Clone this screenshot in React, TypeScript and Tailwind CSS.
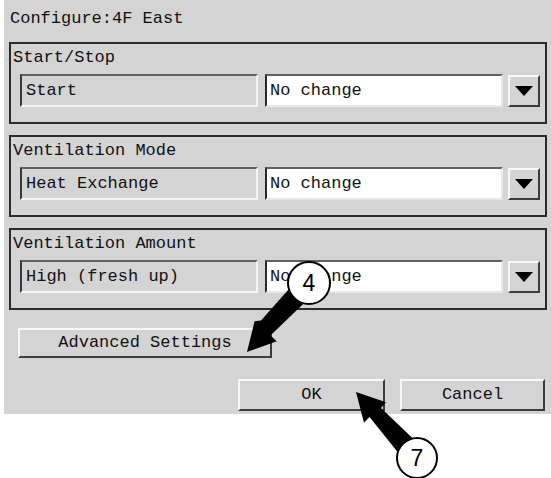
import type { ReactNode } from 'react'

const groups = [
  { title: 'Start/Stop', value: 'Start' },
  { title: 'Ventilation Mode', value: 'Heat Exchange' },
  { title: 'Ventilation Amount', value: 'High (fresh up)' },
]

function RaisedButton({ className, children }: { className: string; children?: ReactNode }) {
  return (
    <div
      className={
        'flex items-center justify-center border-2 border-t-[#f8f8f8] border-l-[#f8f8f8] border-b-[#3c3c3c] border-r-[#3c3c3c] bg-[#d4d4d4] ' +
        className
      }
    >
      {children}
    </div>
  )
}

function Group({ title, value }: { title: string; value: string }) {
  return (
    <div className="h-[82px] border-2 border-[#2b2b2b]">
      <div className="h-[30px] pl-[2px] pt-[4px] leading-[20px]">{title}</div>
      <div className="flex items-center pl-[9px] pr-[5px]">
        {/* read-only current value */}
        <div className="flex h-[33px] w-[238px] items-center border-2 border-t-[#606060] border-l-[#383838] border-b-[#f4f4f4] border-r-[#f4f4f4] pl-[4px]">
          {value}
        </div>
        {/* combo box */}
        <div className="ml-[7px] flex h-[33px] w-[238px] items-center border-2 border-t-[#606060] border-l-[#2a2a2a] border-b-[#e8e8e8] border-r-[#e8e8e8] bg-white pl-[3px]">
          No change
        </div>
        <RaisedButton className="ml-[5px] h-[32px] w-[32px]">
          <svg width="20" height="12" viewBox="0 0 20 12">
            <polygon points="1,1 19,1 10,11" fill="#000" />
          </svg>
        </RaisedButton>
      </div>
    </div>
  )
}

function Arrow({ points }: { points: string }) {
  return <polygon points={points} fill="#000" />
}

export default function App() {
  return (
    <div className="relative h-[478px] w-[551px] bg-white font-['Liberation_Mono',monospace] text-[17px] text-[#111]">
      <div className="ml-[4px] h-[414px] w-[547px] bg-[#d4d4d4] pl-[5px] pr-[4px]">
        <div className="h-[42px] pl-[1px] pt-[9px] leading-[20px]">Configure:4F East</div>
        <div className="flex flex-col gap-[11px]">
          {groups.map(g => (
            <Group key={g.title} title={g.title} value={g.value} />
          ))}
        </div>
        <RaisedButton className="ml-[9px] mt-[18px] h-[30px] w-[254px]">Advanced Settings</RaisedButton>
        <div className="mt-[21px] flex justify-end gap-[15px] pr-[2px]">
          <RaisedButton className="h-[32px] w-[147px]">OK</RaisedButton>
          <RaisedButton className="h-[32px] w-[145px]">Cancel</RaisedButton>
        </div>
      </div>

      {/* callout arrows */}
      <svg className="absolute left-0 top-0" width="551" height="478" viewBox="0 0 551 478">
        <Arrow points="309,283 300.5,276 261,320.6 254.6,321.2 247,352 276.8,341.2 270.4,335.5 317.8,290" />
        <Arrow points="417,458 425.5,450.5 381,408.1 386,402.3 356,392 364,422.7 369.5,417 408.5,465.5" />
        <circle cx="309" cy="283" r="21" fill="#fff" stroke="#000" strokeWidth="2" />
        <circle cx="417" cy="458" r="20" fill="#fff" stroke="#000" strokeWidth="2" />
        <text x="309" y="291" textAnchor="middle" fontFamily="Liberation Sans, Arial, sans-serif" fontSize="23" fill="#000">
          4
        </text>
        <text x="417" y="466" textAnchor="middle" fontFamily="Liberation Sans, Arial, sans-serif" fontSize="23" fill="#000">
          7
        </text>
      </svg>
    </div>
  )
}
